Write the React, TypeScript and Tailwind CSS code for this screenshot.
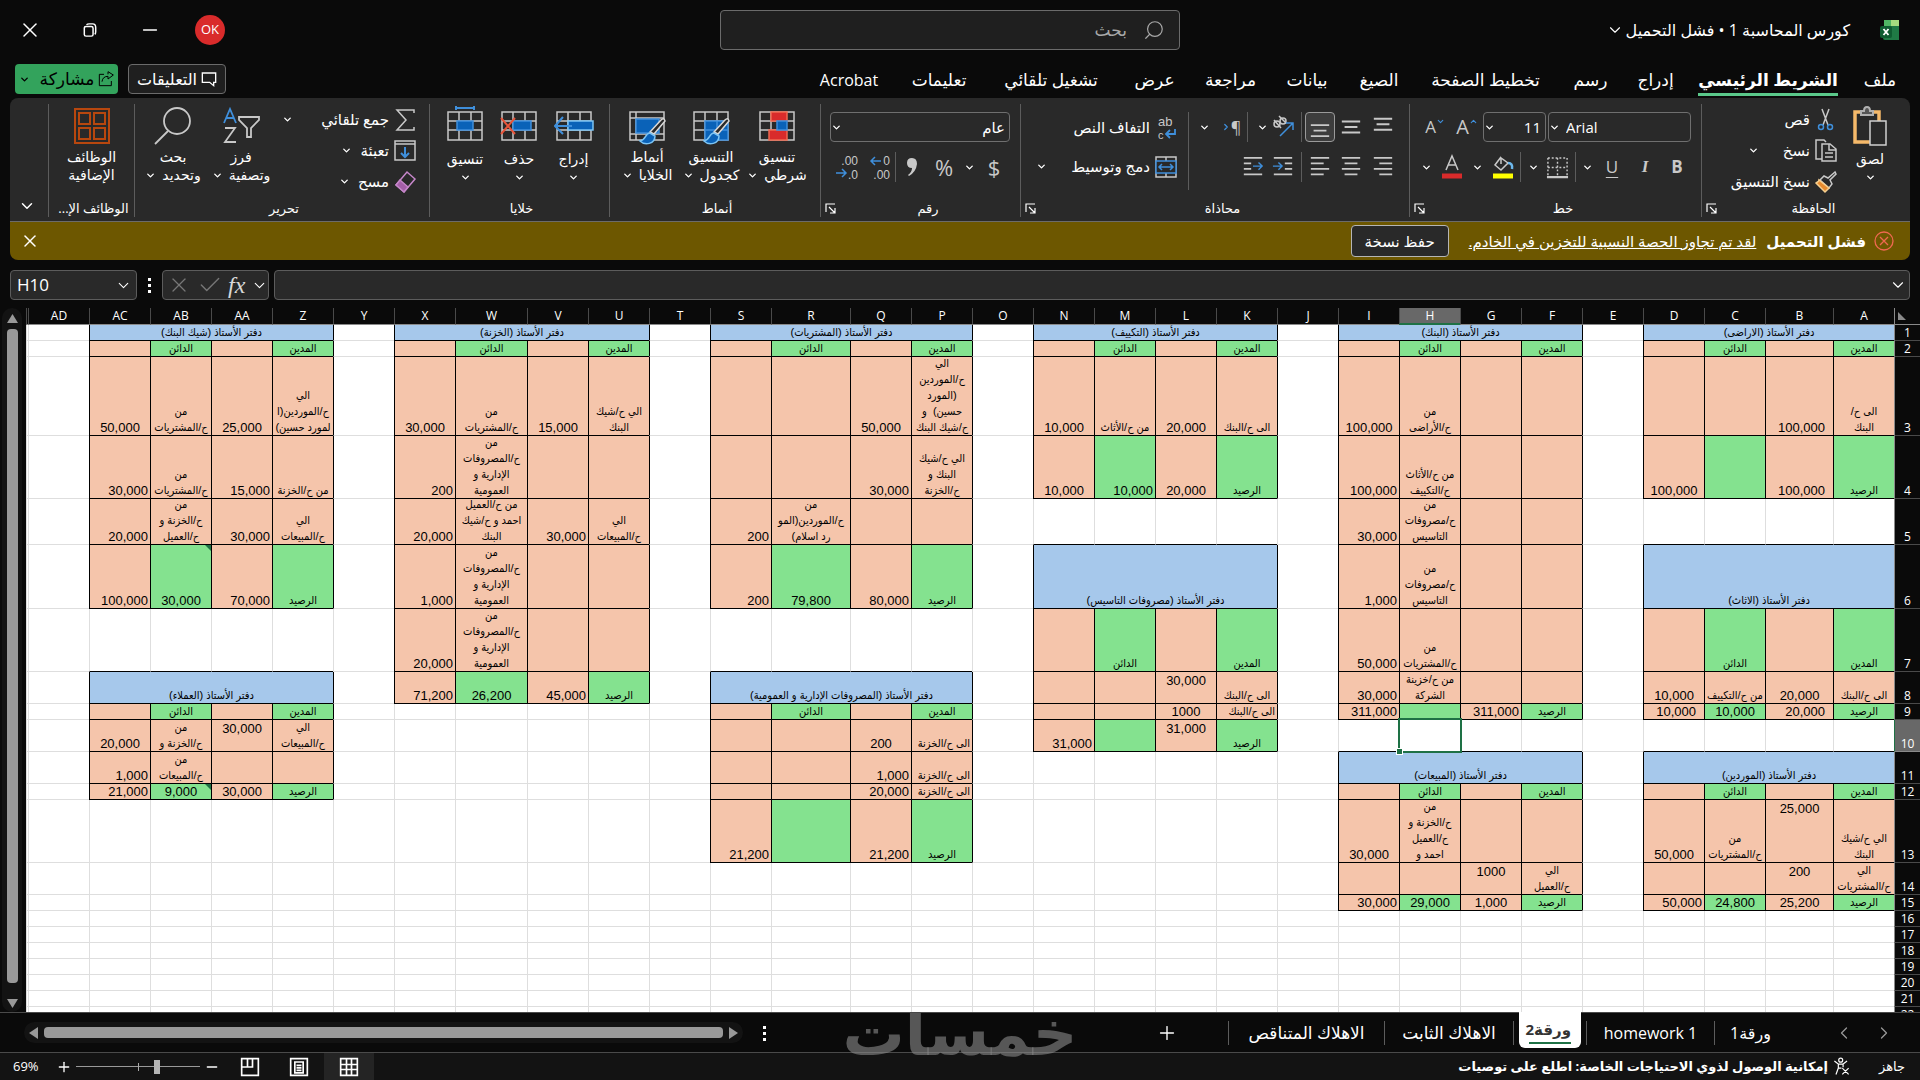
import type { ReactNode } from 'react';
import { ChevronDown, ChevronLeft, ChevronRight, X, Check, Minus, Plus, Search } from 'lucide-react';
import { clsx } from 'clsx';

type Row = [string, string, string, string];

interface Ledger {
  col: number;
  top: number;
  title: string;
  rows: Row[];
}

// Amount prefixes: c = centred, t = centred at the top, i = indented, s = start. No prefix = flush right.
const LEDGERS: Ledger[] = [
  {
    col: 0,
    top: 1,
    title: 'دفتر الأستاذ (الاراضى)',
    rows: [
      ['الى ح/\nالبنك', 'i100,000', '', ''],
      ['الرصيد', 'i100,000', '', 'c100,000'],
    ],
  },
  {
    col: 0,
    top: 6,
    title: 'دفتر الأستاذ (الاثاث)',
    rows: [
      ['الى ح/البنك', 'c20,000', 'من ح/التكييف', 'c10,000'],
      ['الرصيد', 'i20,000', 'c10,000', 'i10,000'],
    ],
  },
  {
    col: 0,
    top: 11,
    title: 'دفتر الأستاذ (الموردين)',
    rows: [
      ['الي ح/شيك\nالبنك', 't25,000', 'من\nح/المشتريات', 'c50,000'],
      ['الي\nح/المشتريات', 't200', '', ''],
      ['الرصيد', 'c25,200', 'c24,800', '50,000'],
    ],
  },
  {
    col: 5,
    top: 1,
    title: 'دفتر الأستاذ (البنك)',
    rows: [
      ['', '', 'من\nح/الأراضى', 'c100,000'],
      ['', '', 'من ح/الأثاث\nح/التكييف', '100,000'],
      ['', '', 'من\nح/مصروفات\nالتاسيس', '30,000'],
      ['', '', 'من\nح/مصروفات\nالتاسيس', '1,000'],
      ['', '', 'من\nح/المشتريات', '50,000'],
      ['', '', 'من ح/خزينة\nالشركة', '30,000'],
      ['الرصيد', '311,000', '', '311,000'],
    ],
  },
  {
    col: 5,
    top: 11,
    title: 'دفتر الأستاذ (المبيعات)',
    rows: [
      ['', '', 'من\nح/الخزنة و\nح/العميل\nاحمد و', 'c30,000'],
      ['الي\nح/العميل', 't1000', '', ''],
      ['الرصيد', 'c1,000', 'c29,000', '30,000'],
    ],
  },
  {
    col: 10,
    top: 1,
    title: 'دفتر الأستاذ (التكييف)',
    rows: [
      ['الى ح/البنك', 'c20,000', 'من ح/الأثاث', 'c10,000'],
      ['الرصيد', 'c20,000', '10,000', 'c10,000'],
    ],
  },
  {
    col: 10,
    top: 6,
    title: 'دفتر الأستاذ (مصروفات التاسيس)',
    rows: [
      ['الى ح/البنك', 't30,000', '', ''],
      ['sالى ح/البنك', 'c1000', '', ''],
      ['الرصيد', 't31,000', '', '31,000'],
    ],
  },
  {
    col: 15,
    top: 1,
    title: 'دفتر الأستاذ (المشتريات)',
    rows: [
      ['الي\nح/الموردين\n(المورد\nحسين)  و\nح/شيك البنك', 'c50,000', '', ''],
      ['الي ح/شيك\nالبنك و\nح/الخزنة', '30,000', '', ''],
      ['', '', 'من\nح/الموردين(المو\nرد اسلام)', '200'],
      ['الرصيد', '80,000', 'c79,800', '200'],
    ],
  },
  {
    col: 15,
    top: 8,
    title: 'دفتر الأستاذ (المصروفات الإدارية و العمومية)',
    rows: [
      ['sالى ح/الخزنة', 'c200', '', ''],
      ['sالى ح/الخزنة', '1,000', '', ''],
      ['sالى ح/الخزنة', '20,000', '', ''],
      ['الرصيد', '21,200', '', '21,200'],
    ],
  },
  {
    col: 20,
    top: 1,
    title: 'دفتر الأستاذ (الخزنة)',
    rows: [
      ['الي ح/شيك\nالبنك', 'c15,000', 'من\nح/المشتريات', 'c30,000'],
      ['', '', 'من\nح/المصروفات\nالإدارية و\nالعمومية', '200'],
      ['الي\nح/المبيعات', '30,000', 'من ح/العميل\nاحمد و ح/شيك\nالبنك', '20,000'],
      ['', '', 'من\nح/المصروفات\nالإدارية و\nالعمومية', '1,000'],
      ['', '', 'من\nح/المصروفات\nالإدارية و\nالعمومية', '20,000'],
      ['الرصيد', '45,000', 'c26,200', '71,200'],
    ],
  },
  {
    col: 25,
    top: 1,
    title: 'دفتر الأستاذ (شيك البنك)',
    rows: [
      ['الي\nح/الموردين(ا\nلمورد حسين)', 'c25,000', 'من\nح/المشتريات', 'c50,000'],
      ['من ح/الخزنة', '15,000', 'من\nح/المشتريات', '30,000'],
      ['الي\nح/المبيعات', '30,000', 'من\nح/الخزنة و\nح/العميل', '20,000'],
      ['الرصيد', '70,000', 'c30,000', '100,000'],
    ],
  },
  {
    col: 25,
    top: 8,
    title: 'دفتر الأستاذ (العملاء)',
    rows: [
      ['الي\nح/المبيعات', 't30,000', 'من\nح/الخزنة و', 'c20,000'],
      ['', '', 'من\nح/المبيعات', '1,000'],
      ['الرصيد', 'c30,000', 'c9,000', '21,000'],
    ],
  },
];

const COLUMNS = [...'ABCDEFGHIJKLMNOPQRSTUVWXYZ', 'AA', 'AB', 'AC', 'AD', 'AE'];
const WIDE: Record<string, number> = { B: 68, R: 79, W: 72 };
const ROW_HEIGHTS = [16, 16, 79, 63, 46, 64, 63, 32, 16, 32, 32, 16, 63, 32, 16, 16, 16, 16, 16, 16, 16, 16];
const FLAGGED = ['AB6', 'AB12'];
const SELECTED = { col: 7, row: 10 };

interface CellInfo {
  text: string;
  fill: string;
  span?: number;
  skip?: boolean;
}

const GREEN = 'bg-[#84e28f]';
const PEACH = 'bg-[#f5c5ab]';
const BLUE = 'bg-[#a6c8eb]';

const cells = new Map<string, CellInfo>();
LEDGERS.forEach(({ col, top, title, rows }) => {
  for (let i = 0; i < 4; i++) {
    cells.set(`${col + i}:${top}`, { text: i ? '' : title, fill: BLUE, span: 4, skip: i > 0 });
  }
  const body: Row[] = [['المدين', '', 'الدائن', ''], ...rows];
  body.forEach((row, r) => {
    const strong = r === 0 || r === body.length - 1;
    row.forEach((text, i) => {
      cells.set(`${col + i}:${top + 1 + r}`, { text, fill: strong && i % 2 === 0 ? GREEN : PEACH });
    });
  });
});

function SheetCell({ col, row, height }: { col: number; row: number; height: number }) {
  const cell = cells.get(`${col}:${row}`);
  if (cell?.skip) return null;
  const last = col + (cell?.span ?? 1) - 1;
  const leftEdge = cell || cells.has(`${last + 1}:${row}`);
  const bottomEdge = cell || cells.has(`${col}:${row + 1}`);
  const mark = cell?.text.match(/^[ctis]/)?.[0];
  const text = mark ? cell!.text.slice(1) : cell?.text;
  const numeric = /^[\d,]+$/.test(text ?? '');
  const selected = col === SELECTED.col && row === SELECTED.row;

  return (
    <td
      colSpan={cell?.span}
      className={clsx(
        'relative border-b border-l p-0',
        cell?.fill,
        leftEdge ? 'border-l-black' : 'border-l-[#dedede]',
        bottomEdge ? 'border-b-black' : 'border-b-[#dedede]',
      )}
    >
      <div
        style={{ height: height - 1 }}
        className={clsx(
          'flex overflow-hidden text-center whitespace-pre',
          mark === 't' ? 'items-start pt-0.5' : 'items-end',
          numeric ? 'text-[13px] leading-[14px]' : 'text-[11px] leading-4',
          mark === 's' || (numeric && !mark) ? 'justify-start pr-0.5' : mark === 'i' ? 'justify-start pr-2' : 'justify-center',
        )}
      >
        {text}
      </div>
      {FLAGGED.includes(`${COLUMNS[col]}${row}`) && (
        <svg className="absolute top-0 right-0" width="6" height="6" aria-hidden="true">
          <path d="M0 0H6V6Z" fill="#1e7145" />
        </svg>
      )}
      {selected && (
        <span className="absolute -inset-0.5 z-10 border-2 border-[#1e7145]">
          <span className="absolute -bottom-[3px] -left-[3px] h-[5px] w-[5px] bg-[#1e7145] ring-1 ring-white" />
        </span>
      )}
    </td>
  );
}

function Sheet() {
  return (
    <div className="min-w-0 flex-1 overflow-hidden bg-white">
      <table className="w-full table-fixed border-separate border-spacing-0 font-['Liberation_Sans','DejaVu_Sans_Condensed','DejaVu_Sans',sans-serif] text-black">
        <colgroup>
          <col className="w-[26px]" />
          {COLUMNS.map((name) => (
            <col key={name} style={name === 'AE' ? undefined : { width: WIDE[name] ?? 61 }} />
          ))}
        </colgroup>
        <thead>
          <tr className="h-[17px] bg-[#0a0a0a] font-['Open_Sans',sans-serif] text-xs leading-4 text-white">
            <th className="border-b border-l border-[#8a8a8a] p-0">
              <svg className="mr-auto ml-0.5" width="9" height="10" aria-hidden="true">
                <path d="M1 1V9H9Z" fill="#8a8a8a" />
              </svg>
            </th>
            {COLUMNS.map((name, i) => (
              <th
                key={name}
                scope="col"
                className={clsx(
                  'overflow-hidden border-l border-l-[#4a4a4a] p-0 font-normal',
                  i === SELECTED.col ? 'border-b-2 border-b-[#1e7145] bg-[#686868] leading-[15px]' : 'border-b border-b-[#8a8a8a]',
                )}
              >
                {name !== 'AE' && name}
              </th>
            ))}
          </tr>
        </thead>
        <tbody>
          {ROW_HEIGHTS.map((height, r) => (
            <tr key={r}>
              <th
                scope="row"
                className={clsx(
                  "border-b border-l p-0 align-bottom font-['Open_Sans',sans-serif] text-xs font-normal text-white",
                  r + 1 === SELECTED.row ? 'border-b-[#8a8a8a] border-l-[#1e7145] bg-[#686868]' : 'border-b-[#4a4a4a] border-l-[#8a8a8a] bg-[#0a0a0a]',
                )}
              >
                <div style={{ height: height - 1 }} className="flex items-end justify-center leading-[14px]">
                  {r + 1}
                </div>
              </th>
              {COLUMNS.map((name, c) => (
                <SheetCell key={name} col={c} row={r + 1} height={height} />
              ))}
            </tr>
          ))}
        </tbody>
      </table>
    </div>
  );
}

function Chevron({ className }: { className?: string }) {
  return <ChevronDown size={11} strokeWidth={3} className={clsx('shrink-0', className)} />;
}

function Icon({ size = 24, children, className }: { size?: number; children: ReactNode; className?: string }) {
  return (
    <svg width={size} height={size} viewBox="0 0 24 24" fill="none" stroke="#c8c8c8" strokeWidth="1.5" className={clsx('shrink-0 overflow-visible', className)} aria-hidden="true">
      {children}
    </svg>
  );
}

function Lines({ rows, left, arrow }: { rows: number[][]; left?: boolean; arrow?: ReactNode }) {
  return (
    <Icon size={22}>
      {rows.map(([y, w, x]) => (
        <path key={y} d={`M${x ?? (left ? 2 : 22 - w)} ${y}h${w}`} strokeWidth="2" />
      ))}
      {arrow}
    </Icon>
  );
}

function Group({ label, width, launcher, children }: { label: string; width: string; launcher?: boolean; children: ReactNode }) {
  return (
    <section className={clsx('flex shrink-0 flex-col border-l border-[#5c5c5c]', width)}>
      <div className="flex h-24">{children}</div>
      <div className="flex h-[18px] items-center pl-1 text-[13px] leading-[18px]">
        <span className="flex-1 text-center whitespace-nowrap">{label}</span>
        {launcher && (
          <button aria-label={`خيارات ${label}`}>
            <svg width="11" height="11" viewBox="0 0 11 11" fill="none" stroke="#fff" strokeWidth="1.2" aria-hidden="true">
              <path d="M1 9V1H10M4 4L9.5 9.5M10 5V10H5" />
            </svg>
          </button>
        )}
      </div>
    </section>
  );
}

function BigButton({ icon, lines, width, arrow = true }: { icon: ReactNode; lines: string[]; width: string; arrow?: boolean }) {
  return (
    <button className={clsx('flex shrink-0 flex-col items-center text-sm leading-[18px]', width)}>
      <span className="flex h-11 items-center">{icon}</span>
      {lines[1] ? (
        <>
          <span>{lines[0]}</span>
          <span className="flex items-center gap-1.5 whitespace-nowrap">
            {lines[1]}
            {arrow && <Chevron />}
          </span>
        </>
      ) : (
        <>
          <span className="pt-0.5">{lines[0]}</span>
          <Chevron className="mt-1" />
        </>
      )}
    </button>
  );
}

function SmallButton({ icon, label, arrow }: { icon: ReactNode; label: string; arrow?: string }) {
  return (
    <button className="flex h-[31px] shrink-0 items-center gap-1 text-[15px] whitespace-nowrap">
      {icon}
      {label}
      {arrow && <Chevron className={arrow} />}
    </button>
  );
}

function Tool({ width, label, active, children }: { width: string; label: string; active?: boolean; children: ReactNode }) {
  return (
    <button
      aria-label={label}
      className={clsx('flex h-[30px] shrink-0 items-center justify-center rounded', width, active && 'border border-[#9a9a9a] bg-[#3d3d3d]')}
    >
      {children}
    </button>
  );
}

function Divider({ className }: { className?: string }) {
  return <span className={clsx('w-px shrink-0 bg-[#5c5c5c]', className ?? 'mx-[3px] h-[30px]')} />;
}

function Picker({ label, value, width, ltr }: { label: string; value: string; width: string; ltr?: boolean }) {
  return (
    <label className={clsx('flex h-[30px] shrink-0 items-center rounded border border-[#6f6f6f]', width)}>
      <select aria-label={label} dir={ltr ? 'ltr' : 'rtl'} className="min-w-0 flex-1 appearance-none bg-transparent px-1 pl-1.5 text-[15px] outline-none">
        <option>{value}</option>
      </select>
      <Chevron />
    </label>
  );
}

function TableGlyph({ children }: { children?: ReactNode }) {
  return (
    <svg width="40" height="40" viewBox="0 0 40 40" fill="none" stroke="#c8c8c8" strokeWidth="1.5" aria-hidden="true">
      <path d="M3 6H37V34H3ZM3 15H37M3 24H37M14 6V34M26 6V34" />
      {children}
    </svg>
  );
}

function Brush() {
  return (
    <>
      <path d="M38 15L27 28L23 26L34 14Q37 11 38 15Z" fill="#292929" stroke="#d8d8d8" />
      <path d="M23 27C18 27 19 34 13 35C18 40 28 38 28 30Z" fill="#0a62b8" stroke="#7cc4f4" />
    </>
  );
}

function Ribbon() {
  return (
    <div className="flex h-[124px] overflow-hidden rounded-t-lg border-b border-[#6b6b6b] bg-[#292929] pt-1.5 pb-1">
      <Group label="الحافظة" width="w-[209px]" launcher>
        <div className="w-3.5" />
        <BigButton
          width="w-[52px]"
          lines={['لصق']}
          icon={
            <svg width="36" height="40" viewBox="0 0 36 40" fill="none" aria-hidden="true">
              <path d="M3 6H27V36H3Z" fill="#292929" stroke="#f5b96a" strokeWidth="3.5" />
              <path d="M9 9V5H12Q12 1 15 1Q18 1 18 5H21V9Z" fill="#555" stroke="#b0b0b0" strokeWidth="2" />
              <path d="M18 15H34V39H18Z" fill="#292929" stroke="#d0d0d0" strokeWidth="1.5" />
            </svg>
          }
        />
        <div className="mr-1.5 flex flex-col">
          <SmallButton
            label="قص"
            icon={
              <Icon>
                <path d="M8 1L14 17M15 1L9 17" />
                <circle cx="7" cy="19" r="2.5" stroke="#3f8fdb" />
                <circle cx="16" cy="19" r="2.5" stroke="#3f8fdb" />
              </Icon>
            }
          />
          <SmallButton
            label="نسخ"
            arrow="mr-5"
            icon={
              <Icon>
                <path d="M8 20H2V1H10L12 3M8 5H16L22 10V22H8ZM15 5V11H22M11 14H19M11 18H19" />
              </Icon>
            }
          />
          <SmallButton
            label="نسخ التنسيق"
            icon={
              <Icon>
                <path d="M21 2L14 8L10 6L6 10L15 18L18 14L16 10L22 4Z" />
                <path d="M5 10C5 12 3 12 2 13L11 22L15 18Z" fill="#e88b2f" stroke="#f5cf8f" />
              </Icon>
            }
          />
        </div>
      </Group>

      <Group label="خط" width="w-[292px]" launcher>
        <div className="flex flex-col gap-2.5 pt-2 pr-2">
          <div className="flex items-center pr-0.5">
            <Picker label="نوع الخط" value="Arial" width="w-[143px]" ltr />
            <div className="w-0.5" />
            <Picker label="حجم الخط" value="11" width="w-[63px]" />
            <Tool width="w-8" label="تكبير الخط">
              <span dir="ltr" className="flex items-center text-xl text-[#c8c8c8]">
                A<ChevronDown size={9} strokeWidth={3} className="mb-3 rotate-180 text-[#3f8fdb]" />
              </span>
            </Tool>
            <Tool width="w-8" label="تصغير الخط">
              <span dir="ltr" className="flex items-center text-[17px] text-[#c8c8c8]">
                A<ChevronDown size={9} strokeWidth={3} className="mb-3 text-[#3f8fdb]" />
              </span>
            </Tool>
          </div>
          <div className="flex items-center text-[17px] text-[#c8c8c8]">
            <Tool width="w-8" label="غامق"><b>B</b></Tool>
            <Tool width="w-8" label="مائل"><i className="font-['Liberation_Serif',serif] font-bold">I</i></Tool>
            <Tool width="w-[34px]" label="تسطير"><u className="underline-offset-4">U</u></Tool>
            <Tool width="w-4" label="خيارات التسطير"><Chevron className="text-white" /></Tool>
            <Divider />
            <Tool width="w-[30px]" label="حدود">
              <Icon size={23}>
                <path d="M2 2H22M2 2V21M22 2V21M12 2V21M2 12H22" strokeDasharray="2 2" />
                <path d="M1 22H23" strokeWidth="2.5" />
              </Icon>
            </Tool>
            <Tool width="w-[18px]" label="خيارات الحدود"><Chevron className="text-white" /></Tool>
            <Divider />
            <Tool width="w-[29px]" label="لون التعبئة">
              <Icon>
                <path d="M10 2L4 10L10 15L17 8L10 3V9" />
                <path d="M17 8Q22 8 21 14" stroke="#6db9ee" strokeWidth="2.5" />
                <path d="M2 21H22" stroke="#ff0" strokeWidth="5" />
              </Icon>
            </Tool>
            <Tool width="w-[22px]" label="ألوان التعبئة"><Chevron className="text-white" /></Tool>
            <Tool width="w-7" label="لون الخط">
              <Icon>
                <path d="M6 15L12 1L18 15M8 10H16" />
                <path d="M2 21H22" stroke="#d92b2b" strokeWidth="5" />
              </Icon>
            </Tool>
            <Tool width="w-[23px]" label="ألوان الخط"><Chevron className="text-white" /></Tool>
          </div>
        </div>
      </Group>

      <Group label="محاذاة" width="w-[389px]" launcher>
        <div className="flex w-[220px] flex-col gap-2.5 pt-2 pr-2.5">
          <div className="flex items-center">
            <Tool width="w-8" label="محاذاة للأعلى"><Lines rows={[[3, 20, 2], [9, 14, 5], [15, 20, 2]]} /></Tool>
            <Tool width="w-8" label="محاذاة للوسط"><Lines rows={[[6, 20, 2], [12, 14, 5], [18, 20, 2]]} /></Tool>
            <Tool width="w-[30px]" label="محاذاة للأسفل" active><Lines rows={[[10, 20, 2], [16, 14, 5], [22, 20, 2]]} /></Tool>
            <Divider />
            <Tool width="w-7" label="الاتجاه">
              <Icon>
                <circle cx="5" cy="9" r="3" />
                <circle cx="11" cy="6" r="3" />
                <path d="M2 5L9 13M7 1L14 8" />
                <path d="M8 21L21 8M14 8H21V15" stroke="#3f8fdb" />
              </Icon>
            </Tool>
            <Tool width="w-4" label="خيارات الاتجاه"><Chevron /></Tool>
            <Divider className="mr-1.5 ml-0.5 h-[30px]" />
            <Tool width="w-7" label="اتجاه النص">
              <span dir="ltr" className="flex items-center text-base text-[#c8c8c8]">
                <ChevronRight size={10} strokeWidth={3} className="text-[#3f8fdb]" />¶
              </span>
            </Tool>
            <Tool width="w-[26px]" label="خيارات اتجاه النص"><Chevron /></Tool>
          </div>
          <div className="flex items-center">
            <Tool width="w-8" label="محاذاة لليمين"><Lines rows={[[2, 20], [8, 14], [14, 20], [20, 14]]} /></Tool>
            <Tool width="w-8" label="توسيط"><Lines rows={[[2, 20, 2], [8, 14, 5], [14, 20, 2], [20, 14, 5]]} /></Tool>
            <Tool width="w-[30px]" label="محاذاة لليسار"><Lines left rows={[[2, 20], [8, 14], [14, 20], [20, 14]]} /></Tool>
            <Divider />
            <Tool width="w-[30px]" label="إنقاص المسافة">
              <Lines rows={[[2, 20], [8, 8], [14, 8], [20, 20]]} arrow={<path d="M1 11H11M7 7L11 11L7 15" stroke="#3f8fdb" />} />
            </Tool>
            <Tool width="w-[30px]" label="زيادة المسافة">
              <Lines left rows={[[2, 20], [8, 8], [14, 8], [20, 20]]} arrow={<path d="M12 11H22M18 7L22 11L18 15" stroke="#3f8fdb" />} />
            </Tool>
          </div>
        </div>
        <Divider className="mt-2 h-[78px]" />
        <div className="flex flex-col gap-2 pt-2 pr-2.5">
          <SmallButton
            label="التفاف النص"
            icon={
              <svg width="24" height="26" viewBox="0 0 24 26" fill="none" stroke="#3f8fdb" strokeWidth="1.8" className="overflow-visible font-['Liberation_Sans',sans-serif]" aria-hidden="true">
                <text x="4" y="11" fontSize="13" fill="#c8c8c8" stroke="none" direction="ltr">ab</text>
                <text x="4" y="24" fontSize="11" fill="#c8c8c8" stroke="none" direction="ltr">c</text>
                <path d="M21 14V19H12M16 15L12 19L16 23" />
              </svg>
            }
          />
          <SmallButton
            label="دمج وتوسيط"
            arrow="mr-5"
            icon={
              <Icon>
                <path d="M2 2H22V22H2ZM12 2V22" />
                <path d="M2 6H22V18H2Z" fill="#292929" stroke="#3f8fdb" />
                <path d="M5 12H19M8 9L5 12L8 15M16 9L19 12L16 15" stroke="#3f8fdb" />
              </Icon>
            }
          />
        </div>
      </Group>

      <Group label="رقم" width="w-[200px]" launcher>
        <div className="flex flex-col gap-2.5 pt-2 pr-2.5">
          <Picker label="تنسيق الأرقام" value="عام" width="w-[180px]" />
          <div className="flex items-center text-[22px] text-[#c8c8c8]">
            <Tool width="w-8" label="عملة">$</Tool>
            <Tool width="w-[18px]" label="خيارات العملة"><Chevron className="text-white" /></Tool>
            <Tool width="w-8" label="نسبة مئوية">%</Tool>
            <Tool width="w-8" label="فاصلة">
              <Icon><path d="M12 3Q17 3 17 9Q16 17 9 21L8 20Q12 17 12 13Q7 13 7 8Q7 3 12 3Z" fill="#c8c8c8" stroke="none" /></Icon>
            </Tool>
            <Divider className="h-[30px]" />
            {[
              { name: 'زيادة الخانات', top: '0', bottom: '.00', arrow: 'M14 6H4M8 2L4 6L8 10' },
              { name: 'إنقاص الخانات', top: '.00', bottom: '.0', arrow: 'M1 18H11M7 14L11 18L7 22' },
            ].map(({ name, top, bottom, arrow }) => (
              <Tool key={name} width="w-8" label={name}>
                <Icon className="font-['Liberation_Sans',sans-serif]">
                  <text x="23" y="10" fontSize="12" fill="#c8c8c8" stroke="none" direction="ltr" textAnchor="end">{top}</text>
                  <text x="23" y="24" fontSize="12" fill="#c8c8c8" stroke="none" direction="ltr" textAnchor="end">{bottom}</text>
                  <path d={arrow} stroke="#3f8fdb" />
                </Icon>
              </Tool>
            ))}
          </div>
        </div>
      </Group>

      <Group label="أنماط" width="w-[211px]">
        <div className="w-2.5" />
        <BigButton
          width="w-[66px]"
          lines={['تنسيق', 'شرطي']}
          icon={
            <TableGlyph>
              <path d="M14 6H30V15H14ZM12 24H30V34H12Z" fill="#d92b2b" stroke="#ef6950" />
              <path d="M20 15H30V24H20Z" fill="#0a62b8" stroke="#3f8fdb" />
            </TableGlyph>
          }
        />
        <BigButton
          width="w-[66px]"
          lines={['التنسيق', 'كجدول']}
          icon={
            <TableGlyph>
              <path d="M14 15H37V34H14Z" fill="#0a62b8" stroke="#3f8fdb" />
              <path d="M14 24H37M26 15V34" stroke="#3f8fdb" />
              <Brush />
            </TableGlyph>
          }
        />
        <BigButton
          width="w-[62px]"
          lines={['أنماط', 'الخلايا']}
          icon={
            <svg width="40" height="40" viewBox="0 0 40 40" fill="none" stroke="#c8c8c8" strokeWidth="1.5" aria-hidden="true">
              <path d="M3 6H37V34H3ZM3 12H37M3 28H37M9 6V34" />
              <path d="M9 13H32V27H9Z" fill="#0a62b8" stroke="#3f8fdb" />
              <Brush />
            </svg>
          }
        />
      </Group>

      <Group label="خلايا" width="w-[180px]">
        <div className="w-2" />
        <BigButton
          width="w-[55px]"
          lines={['إدراج']}
          icon={
            <TableGlyph>
              <path d="M14 15H39V24H14Z" fill="#0a62b8" stroke="#7cc4f4" />
              <path d="M18 20H1M9 11L1 20L9 28" stroke="#3f8fdb" strokeWidth="2" />
            </TableGlyph>
          }
        />
        <BigButton
          width="w-[54px]"
          lines={['حذف']}
          icon={
            <TableGlyph>
              <path d="M14 15H32V24H14Z" fill="#0a62b8" stroke="#3f8fdb" />
              <path d="M2 12L16 28M16 12L2 28" stroke="#e8543a" strokeWidth="2" />
            </TableGlyph>
          }
        />
        <BigButton
          width="w-[54px]"
          lines={['تنسيق']}
          icon={
            <TableGlyph>
              <path d="M12 15H28V24H12Z" fill="#0a62b8" stroke="#3f8fdb" />
              <path d="M11 2H29M11 0V4M29 0V4" stroke="#3f8fdb" strokeWidth="2" />
            </TableGlyph>
          }
        />
      </Group>

      <Group label="تحرير" width="w-[295px]">
        <div className="flex w-[148px] flex-col pr-3">
          <SmallButton label="جمع تلقائي" arrow="mr-6" icon={<Icon><path d="M21 5V2H4L13 12L4 22H21V19" strokeWidth="1.5" /></Icon>} />
          <SmallButton
            label="تعبئة"
            arrow="mr-1"
            icon={
              <Icon>
                <path d="M2 2H22V21H2ZM2 5H22" />
                <path d="M12 8V18M8 14L12 18L16 14" stroke="#3f8fdb" strokeWidth="2" />
              </Icon>
            }
          />
          <SmallButton
            label="مسح"
            arrow="mr-1"
            icon={
              <Icon>
                <path d="M14 2L22 9L11 22L3 15Z" stroke="#c586c9" />
                <path d="M7 10L15 17L11 22L3 15Z" fill="#a45fa8" stroke="#c586c9" />
              </Icon>
            }
          />
        </div>
        <BigButton
          width="w-20"
          lines={['فرز', 'وتصفية']}
          icon={
            <svg width="38" height="38" viewBox="0 0 38 38" fill="none" stroke="#c8c8c8" strokeWidth="1.8" aria-hidden="true">
              <path d="M2 16L8 2L14 16M4 11H12" stroke="#3f8fdb" />
              <path d="M3 21H13L3 35H14" />
              <path d="M17 10H37V13L29 21V30H25V21L17 13Z" />
            </svg>
          }
        />
        <BigButton
          width="w-14"
          lines={['بحث', 'وتحديد']}
          icon={
            <svg width="38" height="38" viewBox="0 0 38 38" fill="none" stroke="#c8c8c8" strokeWidth="1.8" aria-hidden="true">
              <circle cx="23" cy="14" r="13" />
              <path d="M14 24L1 37" />
            </svg>
          }
        />
      </Group>

      <Group label="الوظائف الإ..." width="w-[86px]">
        <BigButton
          width="w-[85px]"
          arrow={false}
          lines={['الوظائف', 'الإضافية']}
          icon={
            <svg width="38" height="38" viewBox="0 0 38 38" fill="none" stroke="#b8470e" strokeWidth="2" aria-hidden="true">
              <path d="M2 2H36V36H2ZM6 6H17V17H6ZM21 6H32V17H21ZM6 21H17V32H6ZM21 21H32V32H21Z" />
            </svg>
          }
        />
      </Group>

      <button aria-label="طي الشريط" className="flex flex-1 items-end justify-end pb-0.5 pl-2">
        <ChevronDown size={18} />
      </button>
    </div>
  );
}

const TABS = [
  { name: 'ملف', width: 'w-[60px]' },
  { name: 'الشريط الرئيسي', width: 'w-[164px]' },
  { name: 'إدراج', width: 'w-[61px]' },
  { name: 'رسم', width: 'w-[69px]' },
  { name: 'تخطيط الصفحة', width: 'w-[141px]' },
  { name: 'الصيغ', width: 'w-[72px]' },
  { name: 'بيانات', width: 'w-[72px]' },
  { name: 'مراجعة', width: 'w-[81px]' },
  { name: 'عرض', width: 'w-[71px]' },
  { name: 'تشغيل تلقائي', width: 'w-[136px]' },
  { name: 'تعليمات', width: 'w-[88px]' },
  { name: 'Acrobat', width: 'w-[92px]' },
];

function TitleBar() {
  return (
    <header className="flex h-[60px] items-center pr-5">
      <div className="flex flex-1 items-center">
        <svg width="20" height="22" viewBox="0 0 20 22" aria-hidden="true">
          <path d="M4 1H19V8H4Z" fill="#a5dc7f" />
          <path d="M4 1H11V8H4Z" fill="#4fb564" />
          <path d="M3 7H19V21H5Q3 21 3 19Z" fill="#1f7a45" />
          <rect y="7" width="12" height="12" rx="2" fill="#0f5c31" />
          <path d="M3.5 10L8.5 16M8.5 10L3.5 16" stroke="#fff" strokeWidth="1.8" />
        </svg>
        <button className="mr-[30px] flex items-center gap-0.5 text-base">
          كورس المحاسبة 1 • فشل التحميل
          <ChevronDown size={18} strokeWidth={1.5} />
        </button>
      </div>
      <label className="flex h-10 w-[460px] items-center rounded border border-[#6b6b6b] bg-[#1f1f1f] px-3.5 text-[#a8a8a8]">
        <Search size={22} strokeWidth={1.3} className="-scale-x-100" />
        <input aria-label="بحث" placeholder="بحث" className="min-w-0 flex-1 bg-transparent px-4 text-[17px] outline-none placeholder:text-[#a8a8a8]" />
      </label>
      <div className="flex flex-1 items-center justify-end">
        <button className="ml-[15px] h-[30px] w-[30px] rounded-full bg-[#d92b2b] text-[13px]">OK</button>
        <button aria-label="تصغير" className="flex w-[60px] justify-center"><Minus size={22} strokeWidth={1.5} /></button>
        <button aria-label="استعادة" className="flex w-[60px] justify-center">
          <svg width="14" height="14" viewBox="0 0 16 16" fill="none" stroke="#fff" strokeWidth="1.7" aria-hidden="true">
            <rect x="1.5" y="4" width="10" height="11" rx="2" />
            <path d="M4 2Q5 1 7 1H11Q14.5 1 14.5 5V10Q14.5 12 13.5 13" />
          </svg>
        </button>
        <button aria-label="إغلاق" className="flex w-[60px] justify-center"><X size={24} strokeWidth={1.5} /></button>
      </div>
    </header>
  );
}

function TabRow() {
  return (
    <nav className="flex h-[38px] items-center px-2.5">
      {TABS.map(({ name, width }, i) => (
        <button key={name} className={clsx('flex h-[38px] shrink-0 justify-center pt-2 leading-6 whitespace-nowrap', width, name === 'Acrobat' ? 'text-base' : 'text-[17px]')}>
          <span className={clsx('h-7', i === 1 && 'border-b-[3px] border-[#5ac88a] font-bold')}>{name}</span>
        </button>
      ))}
      <div className="mr-auto flex items-center gap-2.5 pl-[5px]">
        <button className="flex h-[30px] w-[98px] items-center justify-center gap-1 rounded border border-[#6b6b6b] bg-[#1f1f1f] text-base">
          <Icon size={16}>
            <path d="M2 3H22V17H19V22L13 17H2Z" stroke="#fff" strokeWidth="2" />
          </Icon>
          التعليقات
        </button>
        <button className="flex h-[30px] w-[103px] items-center justify-center gap-1 rounded bg-[#33a35c] text-[17px] text-black">
          <Icon size={16}>
            <path d="M9 5H2V22H20V15M6 16Q7 8 15 8V12L23 6L15 1V5" stroke="#000" />
          </Icon>
          مشاركة
          <Chevron className="mr-1.5" />
        </button>
      </div>
    </nav>
  );
}

function Warning() {
  return (
    <div role="alert" className="flex h-[38px] items-center rounded-b-lg bg-[#6d5700] pr-4 pl-2.5 text-[15px]">
      <svg width="20" height="20" viewBox="0 0 20 20" fill="none" stroke="#ef6950" strokeWidth="1.3" aria-hidden="true">
        <circle cx="10" cy="10" r="9" />
        <path d="M6 6L14 14M14 6L6 14" />
      </svg>
      <b className="mr-2">فشل التحميل</b>
      <a href="#quota" className="mr-2.5 underline">لقد تم تجاوز الحصة النسبية للتخزين في الخادم.</a>
      <button className="mr-5 h-8 w-[98px] rounded border border-[#b5b5b5] bg-[#292929]">حفظ نسخة</button>
      <button aria-label="إغلاق الرسالة" className="mr-auto"><X size={20} strokeWidth={1.8} /></button>
    </div>
  );
}

function FormulaBar() {
  const box = 'flex h-[30px] items-center rounded border border-[#5c5c5c] bg-[#292929]';
  return (
    <div dir="ltr" className="mt-2.5 flex items-center px-2.5">
      <label className={clsx(box, 'w-[127px] pr-1')}>
        <input aria-label="مربع الاسم" defaultValue="H10" className="min-w-0 flex-1 bg-transparent pl-1.5 text-[17px] outline-none" />
        <ChevronDown size={17} strokeWidth={1.5} />
      </label>
      <svg width="25" height="16" viewBox="0 0 25 16" fill="#fff" aria-hidden="true">
        <path d="M11 1h3v3h-3zM11 7h3v3h-3zM11 13h3v3h-3z" />
      </svg>
      <div className={clsx(box, 'w-[107px] justify-between pl-1')}>
        <button aria-label="إلغاء" className="text-[#777]"><X size={24} strokeWidth={1.3} /></button>
        <button aria-label="إدخال" className="text-[#777]"><Check size={26} strokeWidth={1.3} /></button>
        <button className="font-['Liberation_Serif',serif] text-2xl leading-6 text-[#d8d8d8] italic">fx</button>
        <ChevronDown size={17} strokeWidth={1.5} />
      </div>
      <label className={clsx(box, 'ml-[5px] flex-1 pr-0.5')}>
        <input aria-label="شريط الصيغة" className="min-w-0 flex-1 bg-transparent px-2 outline-none" />
        <ChevronDown size={18} strokeWidth={1.5} />
      </label>
    </div>
  );
}

const SHEETS = [
  { name: 'ورقة1', style: 'w-[72px] text-base' },
  { name: 'homework 1', style: 'w-[128px] text-base' },
  { name: 'ورقة2', style: 'w-[73px]', active: true },
  { name: 'الاهلاك الثابت', style: 'w-[129px] text-[17px]' },
  { name: 'الاهلاك المتناقص', style: 'w-[156px] text-[17px]' },
];

function SheetTabs() {
  return (
    <div className="relative flex h-10 shrink-0 items-center border-t border-[#4a4a4a]">
      <div className="flex w-[134px] items-center gap-5 pr-[26px] text-[#999]">
        <button aria-label="السابق"><ChevronRight size={20} strokeWidth={1.5} /></button>
        <button aria-label="التالي"><ChevronLeft size={20} strokeWidth={1.5} /></button>
      </div>
      {SHEETS.map(({ name, style, active }) =>
        active ? (
          <div key={name} className={clsx('flex h-full shrink-0 items-center', style)}>
            <button className="mx-auto -mt-px h-9 w-[62px] self-start rounded-b-md bg-white px-2.5 text-[15px] font-bold text-[#333]">
              <span className="block border-b-2 border-[#1e7145] leading-[26px] whitespace-nowrap">{name}</span>
            </button>
            <Divider className="h-6" />
          </div>
        ) : (
          <button key={name} className={clsx('h-6 shrink-0 border-l border-[#5c5c5c] leading-5 whitespace-nowrap', style)}>
            {name}
          </button>
        ),
      )}
      <button aria-label="ورقة جديدة" className="mr-[50px]"><Plus size={22} strokeWidth={1.5} /></button>
      <div className="flex flex-1 items-center justify-end pl-6">
        <svg className="ml-5" width="4" height="16" fill="#fff" aria-hidden="true">
          <path d="M0 1h3v3h-3zM0 7h3v3h-3zM0 13h3v3h-3z" />
        </svg>
        <div dir="ltr" className="flex h-[21px] w-[719px] items-center justify-between rounded-full bg-[#131313] px-[5px]">
          <svg width="9" height="12" aria-hidden="true"><path d="M9 0V12L0 6Z" fill="#999" /></svg>
          <div className="mx-1.5 h-[11px] flex-1 rounded bg-[#999]" />
          <svg width="9" height="12" aria-hidden="true"><path d="M0 0V12L9 6Z" fill="#999" /></svg>
        </div>
      </div>
      <div className="pointer-events-none absolute -bottom-4 left-[844px] z-10 flex h-[55px] w-[232px] items-end justify-center overflow-hidden font-['DejaVu_Sans',sans-serif] text-[62px] leading-[68px] font-bold text-[#8a8a8a]/60">
        خمسات
      </div>
    </div>
  );
}

function StatusBar() {
  return (
    <footer className="flex h-7 shrink-0 items-center border-t border-[#4a4a4a] bg-[#131313] pr-[15px] pl-[13px] text-[13px]">
      <span className="w-[54px]">جاهز</span>
      <button className="flex items-center gap-1 font-bold">
        <Icon size={19}>
          <circle cx="11" cy="4" r="2.5" stroke="#fff" />
          <path d="M3 5L8 9V14L5 22M19 5L14 9V13M8 14H12M8 9H14M13 14L21 22M21 14L13 22" stroke="#fff" />
        </Icon>
        إمكانية الوصول لذوي الاحتياجات الخاصة: اطلع على توصيات
      </button>
      <div className="mr-auto flex items-center">
        <button aria-label="عادي" className="flex h-[27px] w-[50px] items-center justify-center bg-[#242424]">
          <Icon size={20}><path d="M2 2H22V22H2ZM2 9H22M2 15H22M9 2V22M15 2V22" strokeWidth="2" stroke="#fff" /></Icon>
        </button>
        <button aria-label="تخطيط الصفحة" className="flex w-[50px] justify-center">
          <Icon size={20}><path d="M2 2H22V22H2ZM7 6H17V19H7ZM9 10H15M9 13H15M9 16H15" strokeWidth="2" stroke="#fff" /></Icon>
        </button>
        <button aria-label="معاينة فواصل الصفحات" className="flex w-12 justify-center">
          <Icon size={20}><path d="M2 2H22V22H2ZM9 2V12M15 2V12H2" strokeWidth="2" stroke="#fff" /></Icon>
        </button>
        <button aria-label="تصغير" className="mr-1.5"><Minus size={16} strokeWidth={2} /></button>
        <input
          type="range"
          aria-label="تكبير/تصغير"
          defaultValue={34}
          className="mx-1 h-4 w-[124px] appearance-none bg-[linear-gradient(90deg,transparent_62px,#aaa_62px_63px,transparent_63px),linear-gradient(#999,#999)] bg-[length:100%_8px,100%_1px] bg-center bg-no-repeat [&::-webkit-slider-thumb]:h-3.5 [&::-webkit-slider-thumb]:w-1.5 [&::-webkit-slider-thumb]:appearance-none [&::-webkit-slider-thumb]:bg-[#b5b5b5]"
        />
        <button aria-label="تكبير"><Plus size={16} strokeWidth={2} /></button>
        <span dir="ltr" className="w-[43px]">69%</span>
      </div>
    </footer>
  );
}

export default function App() {
  return (
    <div dir="rtl" className="flex h-screen flex-col overflow-hidden bg-[#0a0a0a] font-['Open_Sans','DejaVu_Sans',sans-serif] text-white">
      <TitleBar />
      <TabRow />
      <div className="px-2.5">
        <Ribbon />
        <Warning />
      </div>
      <FormulaBar />
      <main className="mt-2 flex min-h-0 flex-1">
        <Sheet />
        <div className="ml-0.5 flex w-6 shrink-0 flex-col items-center pr-1">
          <div className="flex w-5 flex-1 flex-col items-center rounded-full bg-[#131313] pt-1.5 pb-1">
            <svg width="11" height="9" aria-hidden="true"><path d="M0 9H11L5.5 0Z" fill="#999" /></svg>
            <div className="mt-1.5 mb-4 w-[11px] flex-1 rounded bg-[#999]" />
            <svg width="11" height="9" aria-hidden="true"><path d="M0 0H11L5.5 9Z" fill="#999" /></svg>
          </div>
        </div>
      </main>
      <SheetTabs />
      <StatusBar />
    </div>
  );
}
